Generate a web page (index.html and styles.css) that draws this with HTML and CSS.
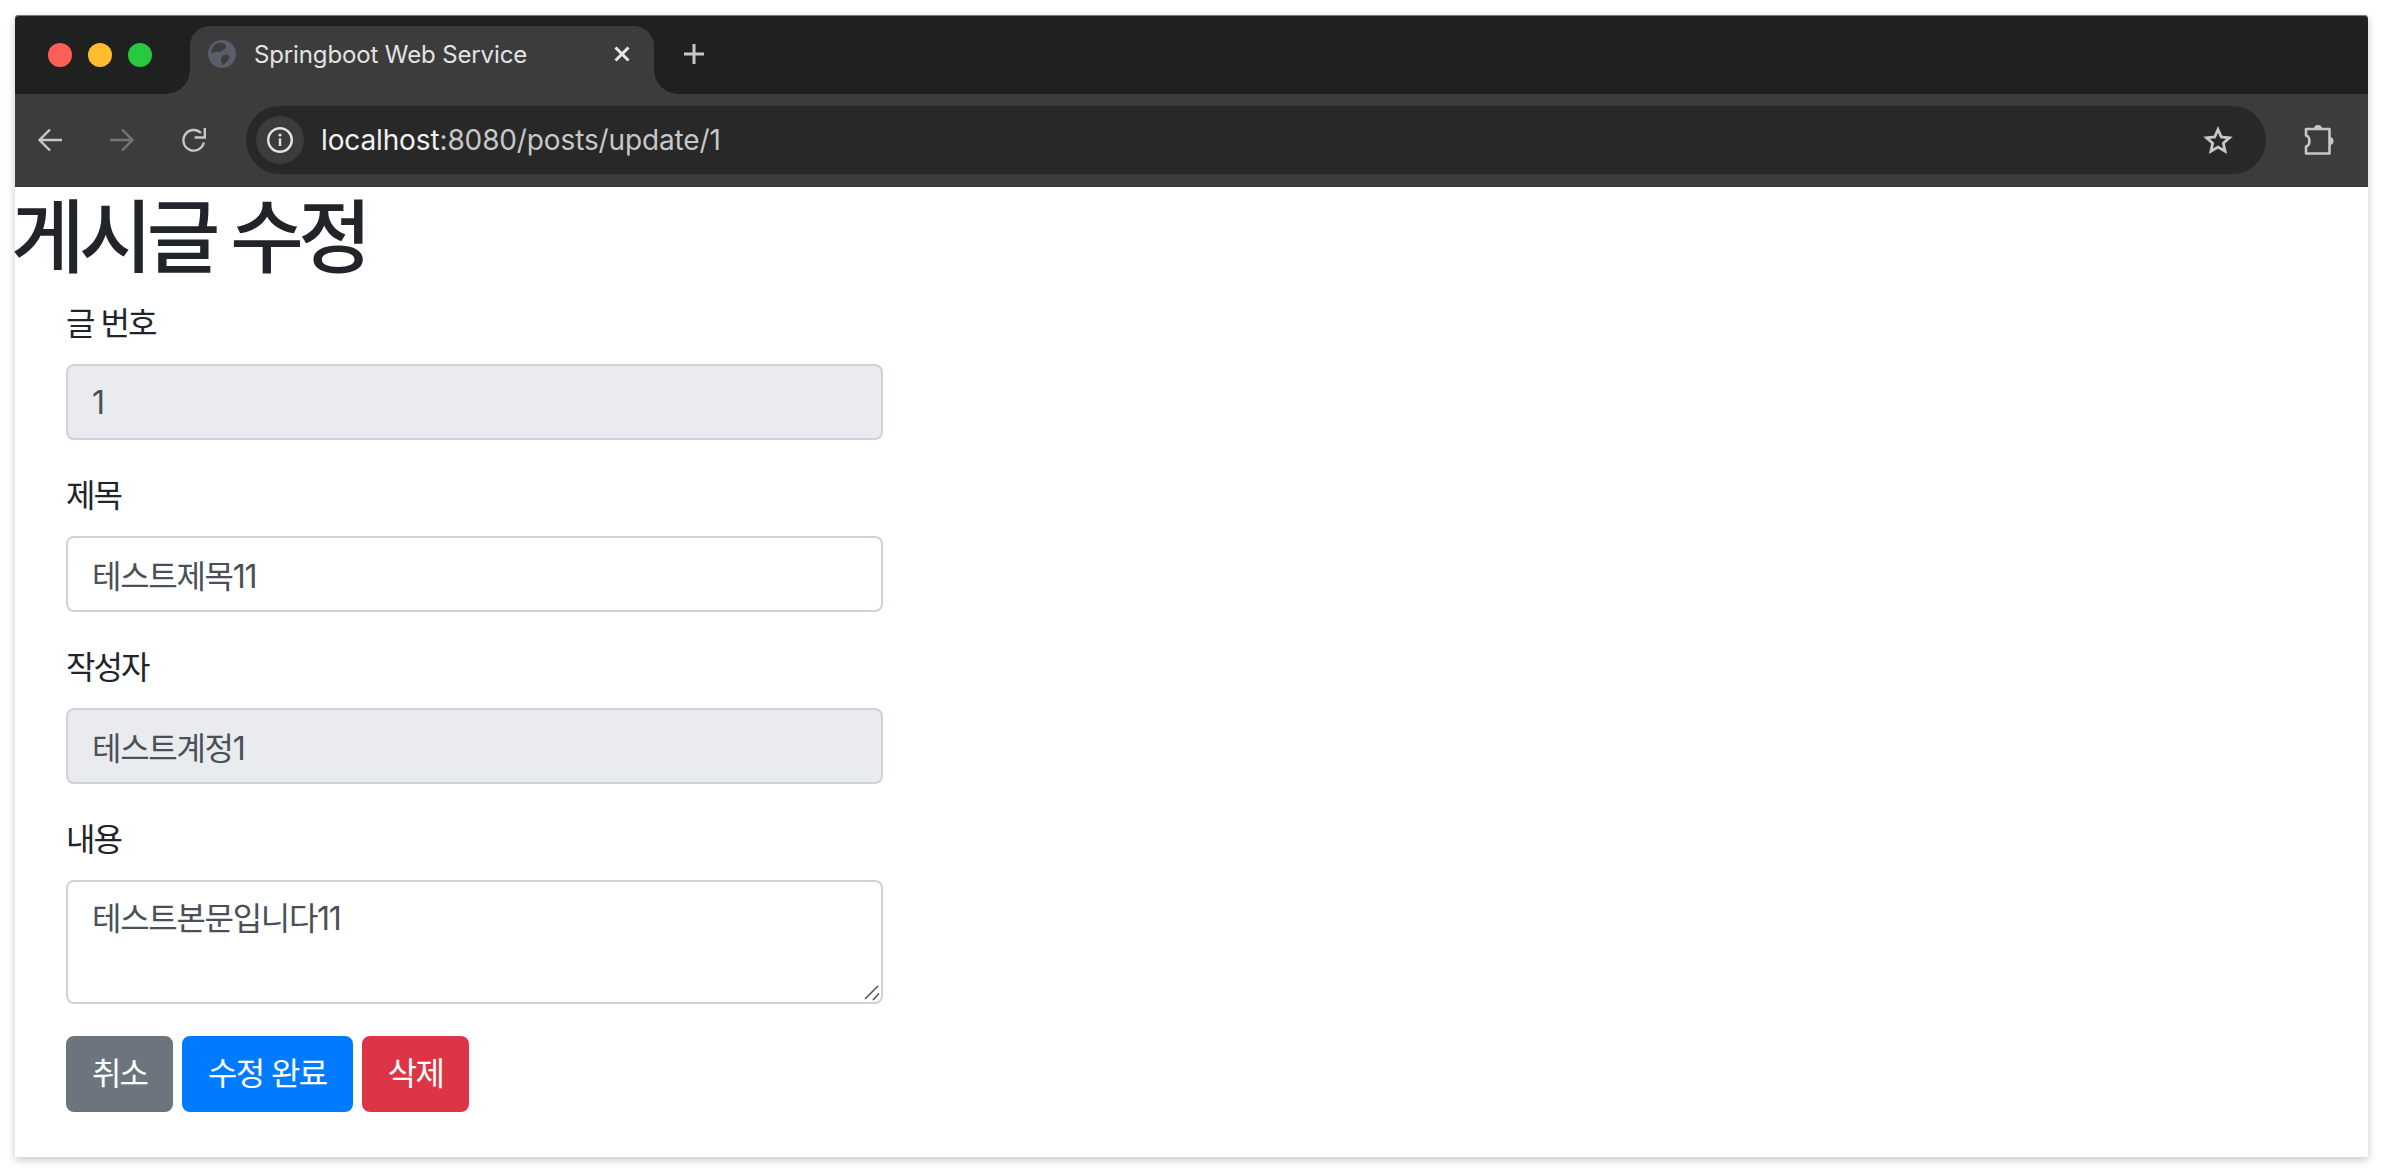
FILE: index.html
```html
<!DOCTYPE html>
<html lang="ko">
<head>
<meta charset="utf-8">
<title>Springboot Web Service</title>
<link rel="stylesheet" href="styles.css">
</head>
<body>
<div class="window">
  <header class="tabbar">
    <div class="lights">
      <span class="light red"></span>
      <span class="light yellow"></span>
      <span class="light green"></span>
    </div>
    <div class="tab">
      <svg class="favicon" viewBox="0 0 28 28"><circle cx="14" cy="14" r="14" fill="#5a5e68"/><path d="M10 3c3-.5 6 .5 7.500 2 1.500 1.500.5 3.500-1.500 4.500-2 1-2.500 2.500-4.500 2.500S8 11 6 12.500 3.500 13 3.500 11C4 7 7 3.500 10 3zM15 15.500c2-1.500 5-1 6 .5 1 2-.5 4-2 5.500s-3.500 3-5 3.500c0-2.500-1-3.500-1-5.500s.5-3 2-4z" fill="#3c3c3c"/></svg>
      <span class="tab-title">Springboot Web Service</span>
      <svg class="tab-close" viewBox="0 0 16 16"><path d="M1.500 1.500l13 13M14.500 1.500l-13 13" stroke="#e8e8e8" stroke-width="3" fill="none"/></svg>
    </div>
    <svg class="newtab" viewBox="0 0 20 20"><path d="M10 0v20M0 10h20" stroke="#c7c7c7" stroke-width="3" fill="none"/></svg>
  </header>
  <nav class="toolbar">
    <svg class="tool" viewBox="0 0 24 24"><path d="M24 12H2M12 1.500L1.500 12 12 22.500" stroke="#c7c7c7" stroke-width="2.400" fill="none"/></svg>
    <svg class="tool" viewBox="0 0 24 24"><path d="M0 12h22M12 1.500L22.500 12 12 22.500" stroke="#757575" stroke-width="2.400" fill="none"/></svg>
    <svg class="tool" viewBox="0 0 24 24"><path d="M21.800 14.500A10.300 10.300 0 1 1 19 5" stroke="#c7c7c7" stroke-width="2.400" fill="none"/><path d="M22.800 0v9.500H12.500" stroke="#c7c7c7" stroke-width="2.400" fill="none"/></svg>
    <div class="omnibox">
      <span class="info">
        <svg viewBox="0 0 26 26"><circle cx="13" cy="13" r="11.800" stroke="#e3e3e3" stroke-width="2.400" fill="none"/><path d="M13 11.500v7.500" stroke="#e3e3e3" stroke-width="2.400"/><circle cx="13" cy="8" r="1.600" fill="#e3e3e3"/></svg>
      </span>
      <span class="url"><span class="host">localhost</span>:8080/posts/update/1</span>
      <svg class="star" viewBox="0 0 30 30"><path d="M15 4.500l3.290 7.470 8.120.82-6.080 5.440 1.720 7.980L15 22.100l-7.050 4.110 1.720-7.980-6.080-5.440 8.120-.82z" stroke="#c7c7c7" stroke-width="2.800" fill="none"/></svg>
    </div>
    <svg class="puzzle" viewBox="0 0 32 32"><path d="M2 5H25.500V29.500H2V22.500C6.500 21.500 6.500 12.500 2 11.500Z" stroke="#c7c7c7" stroke-width="2.600" fill="none" stroke-linejoin="round"/><path d="M10 5a4 4 0 0 1 8 0zM25.500 13a4 4 0 0 1 0 8z" fill="#c7c7c7"/></svg>
  </nav>
  <main class="page">
    <h1 class="heading">게시글 수정</h1>
    <form class="form">
      <div class="group">
        <label class="label">글 번호</label>
        <input class="control" type="text" value="1" readonly>
      </div>
      <div class="group">
        <label class="label">제목</label>
        <input class="control editable" type="text" value="테스트제목11">
      </div>
      <div class="group">
        <label class="label">작성자</label>
        <input class="control" type="text" value="테스트계정1" readonly>
      </div>
      <div class="group">
        <label class="label">내용</label>
        <div class="area-wrap">
          <textarea class="control editable area">테스트본문입니다11</textarea>
          <svg class="grip" viewBox="0 0 16 16"><path d="M1 14L14 1M9 15l6-6.500" stroke="#555" stroke-width="1.600" fill="none"/></svg>
        </div>
      </div>
      <div class="actions">
        <a class="btn grey">취소</a>
        <button class="btn blue" type="button">수정 완료</button>
        <button class="btn red-btn" type="button">삭제</button>
      </div>
    </form>
  </main>
</div>
</body>
</html>
```
FILE: styles.css
```css
* { box-sizing: border-box; }
html, body { margin: 0; height: 100%; background: #fff; }
body { padding: 15px 16px 0 15px; overflow: hidden; font-family: "Inter", "Noto Sans CJK KR", sans-serif; }
.window { width: 2353px; height: 1142px; background: #fff; border-radius: 4px 4px 0 0; box-shadow: 0 3px 8px rgba(0,0,0,.22); display: flex; flex-direction: column; }

.tabbar { height: 79px; background: #1f2120; border-radius: 4px 4px 0 0; box-shadow: inset 0 1px 0 #7a7a7a; display: flex; align-items: flex-end; flex: none; }
.lights { display: flex; gap: 16px; padding: 0 0 27px 33px; width: 175px; flex: none; align-self: flex-end; }
.light { width: 24px; height: 24px; border-radius: 50%; }
.red { background: #ff5f57; }
.yellow { background: #febc2e; }
.green { background: #28c840; }
.tab { position: relative; width: 464px; height: 68px; background: #3c3c3c; border-radius: 20px 20px 0 0; display: flex; align-items: center; padding: 0 0 12px 18px; flex: none; }
.tab::before, .tab::after { content: ""; position: absolute; bottom: 0; width: 24px; height: 24px; background: radial-gradient(circle at 0 0, #1f2120 23.500px, #3c3c3c 24px); }
.tab::before { left: -24px; }
.tab::after { right: -24px; transform: scaleX(-1); }
.favicon { width: 28px; height: 28px; flex: none; }
.tab-title { margin-left: 18px; font-size: 24px; letter-spacing: -.13px; color: #e3e3e3; width: 350px; white-space: nowrap; }
.tab-close { width: 16px; height: 16px; margin-left: 10px; flex: none; }
.newtab { width: 20px; height: 20px; margin: 0 0 30px 30px; flex: none; }

.toolbar { height: 93px; background: #3c3c3c; border-bottom: 1px solid #343434; display: flex; align-items: center; padding-left: 23px; flex: none; }
.tool { width: 24px; height: 24px; margin-right: 48px; flex: none; }
.tool:nth-child(3) { margin-right: 40px; }
.omnibox { width: 2020px; height: 68px; background: #282828; border-radius: 34px; display: flex; align-items: center; padding-left: 10px; flex: none; }
.info { width: 48px; height: 48px; border-radius: 50%; background: #3c3c3c; display: flex; align-items: center; justify-content: center; flex: none; }
.info svg { width: 26px; height: 26px; }
.url { margin-left: 17px; font-size: 28px; letter-spacing: -.13px; color: #c7c7c7; white-space: nowrap; flex: 1; }
.host { color: #f1f1f1; }
.star { width: 30px; height: 30px; margin-right: 33px; flex: none; }
.puzzle { width: 32px; height: 32px; margin-left: 38px; flex: none; }

.page { flex: 1; padding-top: 2px; }
.heading { margin: 0 0 15px -4px; font-size: 80px; line-height: 96px; font-weight: 500; color: #212529; letter-spacing: -5.700px; }
.form { padding-left: 51px; width: 868px; }
.group { margin-bottom: 32px; }
.label { display: block; font-size: 32px; line-height: 48px; margin-bottom: 16px; color: #212529; letter-spacing: -2px; }
.control { display: block; width: 100%; height: 76px; padding: 12px 24px; font: inherit; font-size: 32px; line-height: 48px; color: #495057; background: #e9ebef; border: 2px solid #ced2da; border-radius: 8px; outline: none; letter-spacing: -1.300px; }
.editable { background: #fff; }
.area-wrap { position: relative; }
.area { height: 124px; padding-top: 13px; resize: none; }
.grip { position: absolute; right: 3px; bottom: 3px; width: 16px; height: 16px; }
.actions { display: flex; gap: 9px; }
.btn { display: block; height: 76px; padding: 12px 24px; font: inherit; font-size: 32px; line-height: 48px; color: #fff; border: 2px solid transparent; border-radius: 8px; letter-spacing: -1.600px; }
.grey { background: #6c757d; border-color: #6c757d; letter-spacing: -2px; }
.blue { background: #007bff; border-color: #007bff; }
.red-btn { background: #dc3545; border-color: #dc3545; }
```
